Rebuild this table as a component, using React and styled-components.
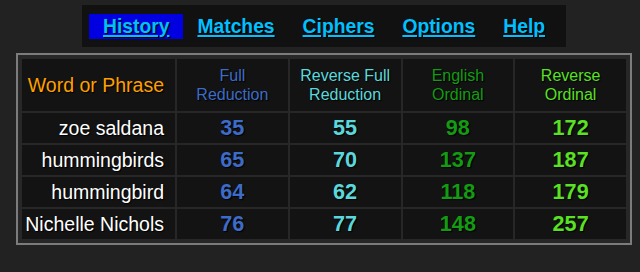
import styled, { createGlobalStyle } from "styled-components";

const GlobalStyle = createGlobalStyle`
    html, body {
        margin: 0;
        padding: 0;
        background: #222222;
    }
    body {
        font-family: "Liberation Sans", Arial, sans-serif;
        width: 640px;
        height: 272px;
        overflow: hidden;
    }
`;

const Page = styled.div`
    display: flex;
    flex-direction: column;
    align-items: flex-start;
    padding: 5px 0 0 16px;
`;

const NavBar = styled.nav`
    display: flex;
    align-items: center;
    margin-left: 66px;
    width: 484px;
    height: 42px;
    box-sizing: border-box;
    padding: 0 7px;
    background: #111111;
`;

const NavLink = styled.a`
    display: block;
    height: 25px;
    line-height: 25px;
    padding: 0 14px;
    font-size: 19.3px;
    font-weight: bold;
    color: #00c0ff;
    text-decoration: underline;
    text-decoration-thickness: 2px;
    text-underline-offset: 2px;
    text-shadow: 1px 1px 1px #000;
    background: ${props => props.active ? "#0000e0" : "transparent"};
    cursor: pointer;
`;

const Table = styled.table`
    margin-top: 6px;
    width: 616px;
    border: 2px solid #7c7c7c;
    padding: 2px;
    border-spacing: 2px;
    background: #272727;
    table-layout: fixed;
`;

const HeadCell = styled.th`
    height: 52px;
    padding: 0;
    background: #131313;
    font-weight: normal;
    font-size: ${props => props.big ? "19.5px" : "16px"};
    line-height: 19px;
    color: ${props => props.color};
    text-align: ${props => props.right ? "right" : "center"};
    padding-right: ${props => props.right ? "11px" : "0"};
    text-shadow: 1px 1px 1px #000;
`;

const NameCell = styled.td`
    height: 30px;
    padding: 0 11px 0 0;
    background: #131313;
    color: #ffffff;
    font-size: 19.5px;
    text-align: right;
    white-space: nowrap;
    text-shadow: 1px 1px 1px #000;
`;

const NumCell = styled.td`
    height: 30px;
    padding: 0;
    background: #131313;
    color: ${props => props.color};
    font-size: 21.6px;
    font-weight: bold;
    text-align: center;
    text-shadow: 1px 1px 1px #000;
`;

const navItems = ["History", "Matches", "Ciphers", "Options", "Help"];

const ciphers = [
    { label: ["Full", "Reduction"], color: "#3d6cc8" },
    { label: ["Reverse Full", "Reduction"], color: "#5cd8dc" },
    { label: ["English", "Ordinal"], color: "#139c13" },
    { label: ["Reverse", "Ordinal"], color: "#5ae024" },
];

const rows = [
    { phrase: "zoe saldana", values: [35, 55, 98, 172] },
    { phrase: "hummingbirds", values: [65, 70, 137, 187] },
    { phrase: "hummingbird", values: [64, 62, 118, 179] },
    { phrase: "Nichelle Nichols", values: [76, 77, 148, 257] },
];

const App = () => {
    return <>
        <GlobalStyle />
        <Page>
            <NavBar>
                {navItems.map(item => <NavLink key={item} active={item === "History" ? 1 : 0}>{item}</NavLink>)}
            </NavBar>
            <Table>
                <colgroup>
                    <col style={{ width: 153 }} />
                    <col />
                    <col />
                    <col />
                    <col />
                </colgroup>
                <thead>
                    <tr>
                        <HeadCell big right color="#ffa000">Word or Phrase</HeadCell>
                        {ciphers.map(c => <HeadCell key={c.label.join(" ")} color={c.color}>
                            {c.label[0]}<br />{c.label[1]}
                        </HeadCell>)}
                    </tr>
                </thead>
                <tbody>
                    {rows.map(row => <tr key={row.phrase}>
                        <NameCell>{row.phrase}</NameCell>
                        {row.values.map((v, i) => <NumCell key={i} color={ciphers[i].color}>{v}</NumCell>)}
                    </tr>)}
                </tbody>
            </Table>
        </Page>
    </>
}

export default App;
